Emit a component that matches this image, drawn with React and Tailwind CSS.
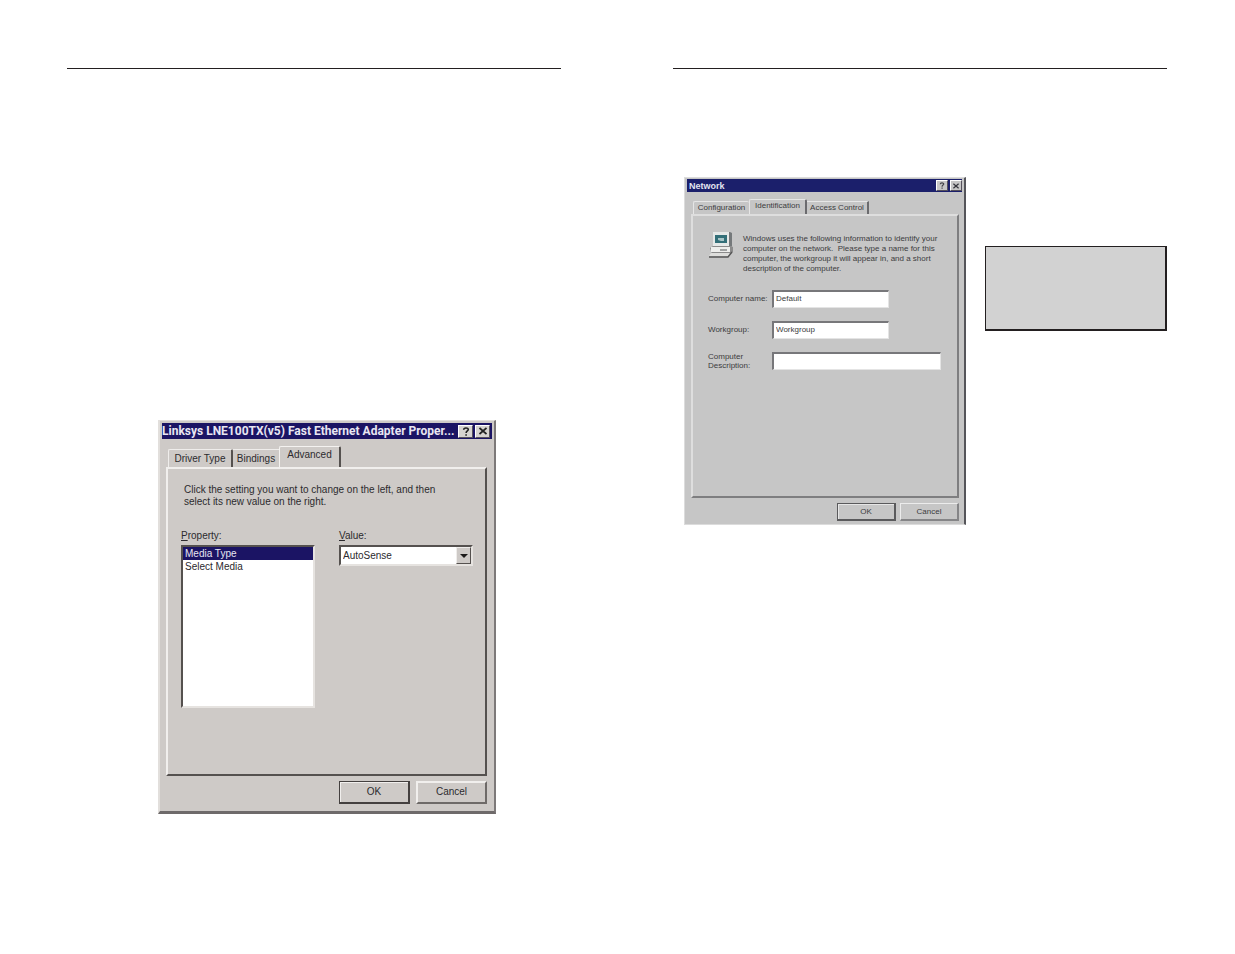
import React, { useState } from 'react';
import clsx from 'clsx';

const adapterSettings = ['Media Type', 'Select Media'];

const HelpGlyph = ({ className }) => (
  <svg viewBox="0 0 8 9" className={className} fill="none" stroke="currentColor" strokeWidth="1.6" aria-hidden="true">
    <path d="M1.7 2.8 C1.7 0.4 6.3 0.4 6.3 2.6 C6.3 4 4.1 4 4.1 6 M4.1 7.2 V8.7" />
  </svg>
);

const CloseGlyph = ({ className }) => (
  <svg viewBox="0 0 8 8" className={className} stroke="currentColor" strokeWidth="1.7" aria-hidden="true">
    <path d="M0.5 1 L7.5 7 M7.5 1 L0.5 7" />
  </svg>
);

const ComputerIcon = () => (
  <svg viewBox="0 0 26 26" className="w-[26px] h-[26px] shrink-0" aria-hidden="true">
    <path d="M6 0 H22 L24 1 V14 L21 16 H7 Z" fill="#75797b" />
    <path d="M5 0 H21 V14 H5 Z" fill="#e6e9e8" />
    <path d="M7 3 H19 V11 H7 Z" fill="#336f78" />
    <path d="M10 6 H16 V9 H13 L10 8 Z" fill="#a9c6c8" />
    <path d="M2 16 L5 14 H23 L25 15 V20 L22 22 H4 Z" fill="#8b8b8b" />
    <path d="M3 15 H22 V20 H3 Z" fill="#eeeeec" />
    <path d="M12 18 H19" stroke="#55595a" strokeWidth="1" />
    <path d="M3 21 H22 L20 24 H1 Z" fill="#dededc" />
    <path d="M1 25 H20 L24 20" fill="none" stroke="#555" strokeWidth="1.4" />
  </svg>
);

const TitleButton = ({ label, className, children }) => (
  <button
    type="button"
    aria-label={label}
    className={clsx('flex items-center justify-center shrink-0 border border-t-white border-l-white border-r-[#55505c] border-b-[#55505c]', className)}
  >
    {children}
  </button>
);

const AdapterDialog = () => {
  const [setting, setSetting] = useState('Media Type');

  return (
    <section
      aria-label="Adapter properties"
      className="w-full max-w-[338px] bg-[#cecac7] text-[10px] leading-3 text-[#2c2a2e] border-l-2 border-l-[#e2dfdc] border-t border-t-[#e2dfdc] border-r-2 border-r-[#7d7979] border-b-3 border-b-[#6e6a6a] px-0.5 pt-0.5 pb-[7px]"
    >
      <div className="flex items-center h-4 bg-[#1b1464] pr-0.5">
        <h2 className="flex-1 font-[Roboto,Arial,sans-serif] font-bold text-[12px] leading-4 text-[#e8e6f2] whitespace-nowrap">
          Linksys LNE100TX(v5) Fast Ethernet Adapter Proper...
        </h2>
        <TitleButton label="Help" className="w-[15px] h-[13px] bg-[#d6d3d0] text-[#222]">
          <HelpGlyph className="w-2 h-[9px]" />
        </TitleButton>
        <TitleButton label="Close" className="w-[15px] h-[13px] ml-0.5 bg-[#d6d3d0] text-[#222]">
          <CloseGlyph className="w-2 h-2" />
        </TitleButton>
      </div>

      <div className="pl-1 pr-[5px] pt-[7px]">
        <div role="tablist" className="flex items-end px-0.5">
          <button type="button" role="tab" aria-selected="false" className="w-[65px] h-[18px] border-t border-l border-t-[#efedeb] border-l-[#efedeb] border-r-2 border-r-[#55514f] rounded-t-xs whitespace-nowrap">
            Driver Type
          </button>
          <button type="button" role="tab" aria-selected="false" className="w-[46px] h-[18px] border-t border-t-[#efedeb] whitespace-nowrap">
            Bindings
          </button>
          <button type="button" role="tab" aria-selected="true" className="w-[62px] h-[21px] pb-1 border-t border-l border-t-[#f4f2f0] border-l-[#f4f2f0] border-r-2 border-r-[#55514f] rounded-t-xs whitespace-nowrap">
            Advanced
          </button>
        </div>

        <div role="tabpanel" className="h-[309px] border-t-2 border-l-2 border-t-[#f1efed] border-l-[#f1efed] border-r-2 border-b-2 border-r-[#55514f] border-b-[#55514f] pl-[13px] pr-3 pt-[15px]">
          <p className="pl-[3px]">
            Click the setting you want to change on the left, and then
            <br />
            select its new value on the right.
          </p>

          <div className="flex pt-[22px]">
            <div className="w-[134px]">
              <div id="property-label" className="h-[15px]"><u>P</u>roperty:</div>
              <ul
                role="listbox"
                aria-labelledby="property-label"
                className="h-[163px] bg-white border-t-2 border-l-2 border-t-[#55514f] border-l-[#55514f] border-r-2 border-b-2 border-r-[#e6e3e0] border-b-[#e6e3e0]"
              >
                {adapterSettings.map((name) => (
                  <li
                    key={name}
                    role="option"
                    aria-selected={setting === name}
                    onClick={() => setSetting(name)}
                    className={clsx('pl-0.5 h-[13px] leading-[13px]', setting === name && 'bg-[#1b1464] text-[#e8e6f2]')}
                  >
                    {name}
                  </li>
                ))}
              </ul>
            </div>

            <div className="w-[134px] ml-6">
              <label htmlFor="value" className="block h-[15px]"><u>V</u>alue:</label>
              <div className="relative">
                <select
                  id="value"
                  className="block w-full h-[21px] pl-0.5 appearance-none bg-white border-t-2 border-l-2 border-t-[#55514f] border-l-[#55514f] border-r-2 border-b-2 border-r-[#e6e3e0] border-b-[#e6e3e0]"
                >
                  <option>AutoSense</option>
                </select>
                <span className="absolute right-0.5 top-0.5 w-[15px] h-[17px] flex items-center justify-center pointer-events-none bg-[#cecac7] border border-t-[#efedeb] border-l-[#efedeb] border-r-[#55514f] border-b-[#55514f]">
                  <svg viewBox="0 0 8 4" className="w-2 h-1" fill="#1c1a1a" aria-hidden="true">
                    <path d="M0 0 H8 L4 4 Z" />
                  </svg>
                </span>
              </div>
            </div>
          </div>
        </div>

        <div className="flex justify-end gap-1.5 pt-[5px]">
          <button type="button" className="w-[71px] h-[23px] border border-r-2 border-b-2 border-[#44403f] shadow-[inset_1px_1px_0_#f1efed]">
            OK
          </button>
          <button type="button" className="w-[71px] h-[23px] pb-px border-t-2 border-l-2 border-t-[#f1efed] border-l-[#f1efed] border-r-2 border-b-2 border-r-[#6e6a68] border-b-[#6e6a68]">
            Cancel
          </button>
        </div>
      </div>
    </section>
  );
};

const IdentityField = ({ id, label, value, wide }) => (
  <div className="flex items-center h-[31px]">
    <label htmlFor={id} className="w-16 shrink-0 leading-[9px] whitespace-pre-line">{label}</label>
    <input
      id={id}
      type="text"
      defaultValue={value}
      className={clsx(
        'h-[18px] pl-0.5 pb-0.5 bg-white border-t-2 border-l-2 border-t-[#77777a] border-l-[#77777a] border-r border-b border-r-[#e4e4e4] border-b-[#e4e4e4]',
        wide ? 'w-[169px]' : 'w-[117px]'
      )}
    />
  </div>
);

const NetworkDialog = () => (
  <section
    aria-label="Network"
    className="w-[282px] shrink-0 bg-[#c6c6c6] text-[8px] leading-[10px] text-[#3c3c40] border-l border-t border-l-[#dcdcdc] border-t-[#dcdcdc] border-r-2 border-r-[#55555a] border-b border-b-[#dcdcdc] px-0.5 pt-px pb-[3px]"
  >
    <div className="flex items-center h-[13px] bg-[#1b1f6b] pl-0.5">
      <h2 className="flex-1 font-bold text-[9px] leading-3 text-[#e2e3f0]">Network</h2>
      <TitleButton label="Help" className="w-3 h-[11px] bg-[#c6c6c6] text-[#44444a]">
        <HelpGlyph className="w-1.5 h-[7px]" />
      </TitleButton>
      <TitleButton label="Close" className="w-3 h-[11px] ml-0.5 bg-[#c6c6c6] text-[#33333a]">
        <CloseGlyph className="w-1.5 h-1.5" />
      </TitleButton>
    </div>

    <div className="pl-1 pr-[3px] pt-[7px]">
      <div role="tablist" className="flex items-end px-0.5">
        <button type="button" role="tab" aria-selected="false" className="w-14 h-[13px] border-t border-l border-t-[#e6e6e6] border-l-[#e6e6e6] rounded-t-xs whitespace-nowrap">
          Configuration
        </button>
        <button type="button" role="tab" aria-selected="true" className="w-[58px] h-[15px] pb-0.5 border-t border-l border-t-[#e6e6e6] border-l-[#e6e6e6] border-r-2 border-r-[#6b6b6e] rounded-t-xs whitespace-nowrap">
          Identification
        </button>
        <button type="button" role="tab" aria-selected="false" className="w-[62px] h-[13px] border-t border-t-[#e6e6e6] border-r-2 border-r-[#6b6b6e] whitespace-nowrap">
          Access Control
        </button>
      </div>

      <div role="tabpanel" className="h-[284px] border-t-2 border-l-2 border-t-[#dedede] border-l-[#dedede] border-r-2 border-b-2 border-r-[#7e7e80] border-b-[#7e7e80] px-[15px] pt-4">
        <div className="flex gap-[9px]">
          <ComputerIcon />
          <p className="whitespace-nowrap pt-0.5">
            Windows uses the following information to identify your
            <br />
            computer on the network.&nbsp; Please type a name for this
            <br />
            computer, the workgroup it will appear in, and a short
            <br />
            description of the computer.
          </p>
        </div>

        <form className="pt-[9px]">
          <IdentityField id="computer-name" label="Computer name:" value="Default" />
          <IdentityField id="workgroup" label="Workgroup:" value="Workgroup" />
          <IdentityField id="description" label={'Computer\nDescription:'} value="" wide />
        </form>
      </div>

      <div className="flex justify-end gap-1 pt-[5px]">
        <button type="button" className="w-[59px] h-[18px] border border-r-2 border-b-2 border-[#5a5a5c] shadow-[inset_1px_1px_0_#e6e6e6]">
          OK
        </button>
        <button type="button" className="w-[59px] h-[18px] border border-t-[#ececec] border-l-[#ececec] border-r-2 border-b-2 border-r-[#858587] border-b-[#858587]">
          Cancel
        </button>
      </div>
    </div>
  </section>
);

const App = () => (
  <main className="min-h-screen bg-white flex gap-28 pl-[67px] pr-[68px] pt-[68px] pb-16 font-['Liberation_Sans',Arial,sans-serif]">
    <div className="flex-1 min-w-0 border-t border-[#231f20]">
      <div className="pl-[91px] pt-[351px]">
        <AdapterDialog />
      </div>
    </div>

    <div className="flex-1 min-w-0 border-t border-[#231f20]">
      <div className="flex items-start gap-[19px] pl-[11px] pt-[108px]">
        <NetworkDialog />
        <aside className="flex-1 h-[85px] mt-[69px] bg-[#d2d2d2] border border-r-2 border-b-2 border-[#231f20]" />
      </div>
    </div>
  </main>
);

export default App;
